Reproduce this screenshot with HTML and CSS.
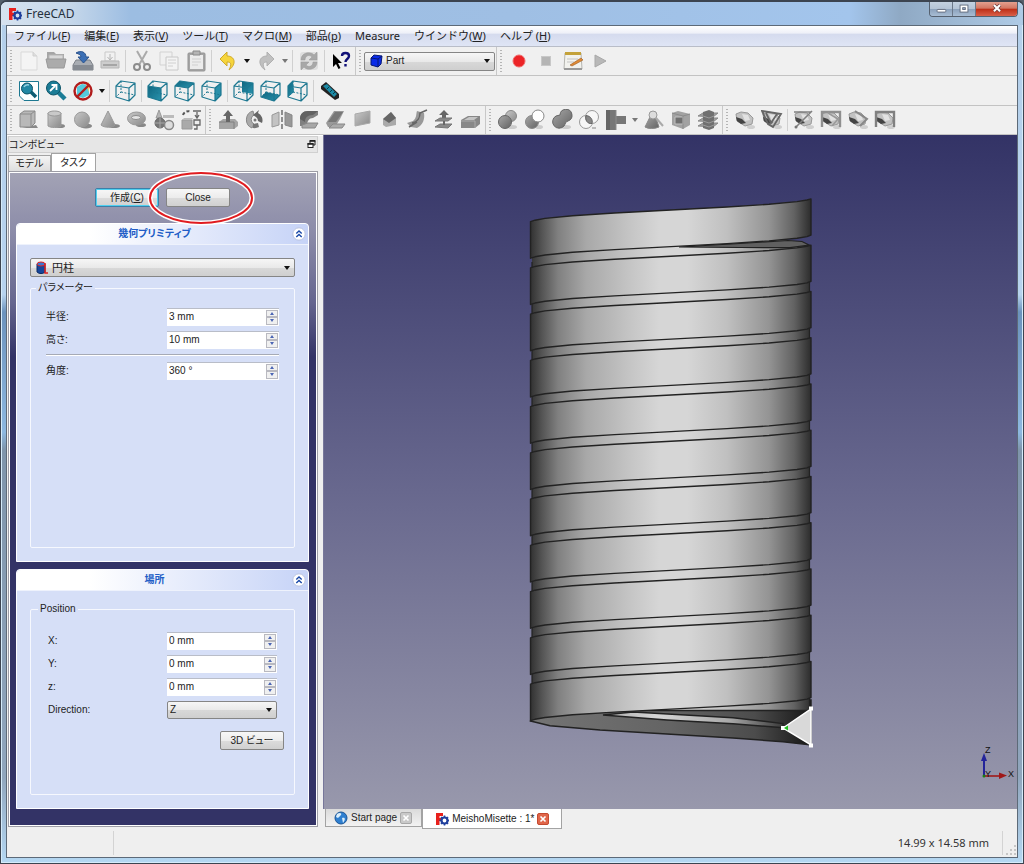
FILE: index.html
```html
<!DOCTYPE html>
<html lang="ja">
<head>
<meta charset="utf-8">
<title>FreeCAD</title>
<link rel="stylesheet" href="styles.css">
</head>
<body>
<svg class="defs" aria-hidden="true">
  <defs>
    <linearGradient id="g-grey" x1="0" y1="0" x2="1" y2="1"><stop offset="0" stop-color="#c9c9c9"/><stop offset="1" stop-color="#8a8a8a"/></linearGradient>
    <linearGradient id="g-dark" x1="0" y1="0" x2="1" y2="1"><stop offset="0" stop-color="#a8a8a8"/><stop offset="1" stop-color="#636363"/></linearGradient>
    <linearGradient id="g-teal" x1="0" y1="0" x2="1" y2="1"><stop offset="0" stop-color="#0e6680"/><stop offset="1" stop-color="#2a93ad"/></linearGradient>
    <symbol id="cube" viewBox="0 0 22 22">
      <path d="M1 6 6 1 20 3 14 8ZM14 8V21L20 15V3M1 6V17L14 21" fill="none" stroke="#1d7891" stroke-width="1.2" stroke-linejoin="round"/>
      <path d="M6 1V12L1 17M6 12 20 15" fill="none" stroke="#1d7891" stroke-dasharray="2 1.5"/>
    </symbol>
    <symbol id="logo" viewBox="0 0 14 14">
      <path d="M1 1H8V4H4.500V6H7V9H4.500V13H1Z" fill="#e8201c"/>
      <circle cx="9.500" cy="8.500" r="3" fill="none" stroke="#1f3f9d" stroke-width="2.200"/>
      <path d="M9.500 3.500V5M9.500 12V13.500M4.500 8.500H6M13 8.500H14M6 5 7 6M12 11 13 12M13 5 12 6M7 11 6 12" stroke="#1f3f9d" stroke-width="1.600"/>
    </symbol>
    <symbol id="mesh" viewBox="0 0 22 22">
      <ellipse cx="17" cy="18" rx="4" ry="2" fill="#cfcfcf"/>
      <path d="M2 5 7 3 14 4 19 9 18 15 11 17 3 12Z" fill="#c2c2c2" stroke="#999"/>
      <path d="M2 8 8 10 12 14 7 15 3 12Z" fill="#444"/>
      <path d="M8 5 14 6 16 11 11 12Z" fill="#e2e2e2"/>
    </symbol>
    <symbol id="chev" viewBox="0 0 14 14">
      <circle cx="7" cy="7" r="6.200" fill="#fff" stroke="#b9c3e0"/>
      <path d="M4.300 6.500 7 4 9.700 6.500M4.300 10 7 7.500 9.700 10" fill="none" stroke="#1848a8" stroke-width="1.400"/>
    </symbol>
  </defs>
</svg>

<div class="window">
  <header class="titlebar">
    <svg class="logo" aria-hidden="true"><use href="#logo"/></svg>
    <span class="title">FreeCAD</span>
    <div class="winbtns">
      <button class="wb" aria-label="最小化"><svg viewBox="0 0 24 16"><rect x="7.500" y="8.500" width="10" height="3" rx="1" fill="#fff" stroke="#5b6577"/></svg></button>
      <button class="wb" aria-label="最大化"><svg viewBox="0 0 24 16"><rect x="7.500" y="3.500" width="9" height="8" fill="#fff" stroke="#5b6577"/><rect x="10.500" y="6.500" width="3" height="2" fill="#9db0cc" stroke="#5b6577"/></svg></button>
      <button class="wb close" aria-label="閉じる"><svg viewBox="0 0 24 16"><path d="M8.500 3.500 15.500 10.500M15.500 3.500 8.500 10.500" stroke="#6d3a3a" stroke-width="4"/><path d="M8.500 3.500 15.500 10.500M15.500 3.500 8.500 10.500" stroke="#fff" stroke-width="2.400"/></svg></button>
    </div>
  </header>

  <div class="client">
    <nav class="menubar">
      <a href="#">ファイル(<u>F</u>)</a><a href="#">編集(<u>E</u>)</a><a href="#">表示(<u>V</u>)</a><a href="#">ツール(<u>T</u>)</a><a href="#">マクロ(<u>M</u>)</a><a href="#">部品(<u>p</u>)</a><a href="#">Measure</a><a href="#">ウインドウ(<u>W</u>)</a><a href="#">ヘルプ (<u>H</u>)</a>
    </nav>

    <div class="toolrow">
      <div class="tools">
        <span class="grip"></span>
        <button aria-label="新規"><svg viewBox="0 0 22 22"><path d="M3 2H15L19 6V20H3Z" fill="#f4f4f4" stroke="#d9d9d9"/><path d="M15 2V6H19" fill="#ddd" stroke="#d0d0d0"/></svg></button>
        <button aria-label="開く"><svg viewBox="0 0 22 22"><path d="M2 2H9L11 4H19V10H2Z" fill="#a5a5a5"/><path d="M4 5H18V10H4Z" fill="#d8d8d8" stroke="#b5b5b5"/><path d="M1 9H21L19 18H3Z" fill="#ababab" stroke="#999"/></svg></button>
        <button aria-label="保存"><svg viewBox="0 0 22 22"><path d="M4 10H18L21 15V20H1V15Z" fill="#a9adb3" stroke="#7c8188"/><path d="M1 15H21V20H1Z" fill="#868b92"/><path d="M4 3C9 0 14 2 14 7H17L11.500 13 6 7H9C9 5 7 4 4 3Z" fill="#3b6fb5" stroke="#2c548d"/></svg></button>
        <button aria-label="印刷"><svg viewBox="0 0 22 22"><path d="M6 2H16V11H6Z" fill="#f1f1f1" stroke="#c9c9c9"/><path d="M11 4V9M8.500 7 11 10 13.500 7" stroke="#b5b5b5" fill="none"/><path d="M2 11H20V18H2Z" fill="#cdcdcd" stroke="#b5b5b5"/><path d="M4 15H18" stroke="#a5a5a5" stroke-width="2"/></svg></button>
        <span class="sep"></span>
        <button aria-label="切り取り"><svg viewBox="0 0 22 22"><path d="M6 1 14 15M16 1 8 15" stroke="#aaa" stroke-width="2"/><circle cx="6" cy="17" r="3" fill="none" stroke="#8c8c8c" stroke-width="2"/><circle cx="16" cy="17" r="3" fill="none" stroke="#8c8c8c" stroke-width="2"/></svg></button>
        <button aria-label="コピー"><svg viewBox="0 0 22 22"><path d="M2 2H14V15H2Z" fill="#f0f0f0" stroke="#d2d2d2"/><path d="M8 7H20V20H8Z" fill="#f3f3f3" stroke="#c8c8c8"/><path d="M10 10H18M10 13H18M10 16H15" stroke="#d0d0d0"/></svg></button>
        <button aria-label="貼り付け"><svg viewBox="0 0 22 22"><rect x="3" y="3" width="17" height="18" rx="1" fill="#a5a5a5" stroke="#959595"/><path d="M5 5H18V19H5Z" fill="#ececec"/><path d="M8 1H15V5H8Z" fill="#b5b5b5" stroke="#8a8a8a"/><path d="M7 9H16M7 12H16M7 15H13" stroke="#d0d0d0"/></svg></button>
        <span class="sep"></span>
        <button aria-label="元に戻す"><svg viewBox="0 0 22 22"><path d="M3 9 10 2V6C18 6 20 14 12 20C15 14 14 12 10 12V16Z" fill="#f6d53c" stroke="#cfa92a"/></svg></button>
        <span class="drop"></span>
        <button aria-label="やり直し"><svg viewBox="0 0 22 22"><path d="M19 9 12 2V6C4 6 2 14 10 20C7 14 8 12 12 12V16Z" fill="#c0c0c0" stroke="#b0b0b0"/></svg></button>
        <span class="drop dim"></span>
        <span class="sep"></span>
        <button aria-label="更新"><svg viewBox="0 0 22 22"><rect x="2" y="2" width="18" height="18" rx="3" fill="#dedede"/><path d="M3 10C3 2 13 1 16 5L19 2V10H11L14 7C11 4 7 6 7 10ZM19 12C19 20 9 21 6 17L3 20V12H11L8 15C11 18 15 16 15 12Z" fill="#a8a8a8" stroke="#989898" stroke-width=".5"/></svg></button>
        <span class="sep"></span>
        <button aria-label="ヘルプ"><svg viewBox="0 0 22 22"><path d="M3 4V17L6 14 8.500 19 10.500 18 8 13H12Z" fill="#000"/><path d="M12 6C12 2 19 2 19 6C19 9 15.500 9 15.500 12M15.500 14V16.500" fill="none" stroke="#101078" stroke-width="2.400"/></svg></button>
      </div>
      <div class="tools">
        <span class="grip"></span>
        <div class="combo wb-combo">
          <svg class="combo-icon" viewBox="0 0 14 14" aria-hidden="true"><path d="M2 4 5 1 13 2 12 10 9 13 2 11Z" fill="#0a2be8" stroke="#071873"/><path d="M2 4 9 5 13 2M9 5V13" fill="none" stroke="#071873"/></svg>
          <select aria-label="ワークベンチ"><option>Part</option></select>
        </div>
      </div>
      <div class="tools last">
        <span class="grip"></span>
        <button aria-label="マクロ記録"><svg viewBox="0 0 22 22"><circle cx="11" cy="11" r="6" fill="#ec2427" stroke="#f06a6a"/></svg></button>
        <button aria-label="停止"><svg viewBox="0 0 22 22"><rect x="6.500" y="6.500" width="9" height="9" fill="#b5b5b5" stroke="#c8c8c8"/></svg></button>
        <button aria-label="マクロ"><svg viewBox="0 0 22 22"><path d="M3 3H19L20 19H2Z" fill="#f2f2ee" stroke="#b5b5b0"/><path d="M3 2H19V5H3Z" fill="#c4a23a"/><path d="M5 9H16M5 12H12" stroke="#c4c4c4"/><path d="M8 15 19 8 21 10 10 16Z" fill="#e08a35" stroke="#9a5a20" stroke-width=".6"/><path d="M2 19H20" stroke="#999" stroke-width="2"/></svg></button>
        <button aria-label="実行"><svg viewBox="0 0 22 22"><path d="M6 5 17 11 6 17Z" fill="#b8b8b8" stroke="#a8a8a8"/></svg></button>
      </div>
    </div>

    <div class="toolrow">
      <div class="tools last">
        <span class="grip"></span>
        <button aria-label="全体表示"><svg viewBox="0 0 22 22"><path d="M1.500 1.500H20.500V20.500H6L1.500 16Z" fill="#fff" stroke="#1d7891"/><circle cx="9" cy="8.500" r="5.500" fill="#2387a3" stroke="#0d5468"/><path d="M6 7C7 5 9 4.500 11 5" stroke="#9ad3e2" fill="none" stroke-width="1.500"/><path d="M13 12 18 17" stroke="#0f5d73" stroke-width="3.600"/></svg></button>
        <button aria-label="選択表示"><svg viewBox="0 0 22 22"><path d="M13 12 20 19" stroke="#1b7c96" stroke-width="4.500"/><circle cx="8.500" cy="8" r="7" fill="#1b7c96" stroke="#0d5468"/><path d="M5 11 10 6M6.500 5H11.500V10" stroke="#fff" stroke-width="1.800" fill="none"/></svg></button>
        <button aria-label="描画スタイル"><svg viewBox="0 0 22 22"><path d="M5 7 10 4 17 5V15L11 18 5 16Z" fill="#55c9dc"/><path d="M14 5 17 2V12" fill="#f0d060"/><circle cx="11" cy="11" r="8.500" fill="none" stroke="#b01c1c" stroke-width="2.400"/><path d="M5 17 17 5" stroke="#b01c1c" stroke-width="2.400"/></svg></button>
        <span class="drop"></span><span class="sep"></span>
        <button aria-label="等角投影"><svg viewBox="0 0 22 22"><use href="#cube"/></svg></button>
        <span class="sep"></span>
        <button aria-label="正面"><svg viewBox="0 0 22 22"><path d="M1 6 14 8V21L1 17Z" fill="url(#g-teal)"/><use href="#cube"/></svg></button>
        <button aria-label="上面"><svg viewBox="0 0 22 22"><path d="M1 6 6 1 20 3 14 8Z" fill="url(#g-teal)"/><use href="#cube"/></svg></button>
        <button aria-label="右面"><svg viewBox="0 0 22 22"><path d="M14 8 20 3V15L14 21Z" fill="#2a8fa9"/><use href="#cube"/></svg></button>
        <span class="sep"></span>
        <button aria-label="背面"><svg viewBox="0 0 22 22"><path d="M9 1.500 20 3V14L9 12Z" fill="url(#g-teal)"/><use href="#cube"/></svg></button>
        <button aria-label="底面"><svg viewBox="0 0 22 22"><path d="M1 17 6 12 20 15 14 21Z" fill="url(#g-teal)"/><use href="#cube"/></svg></button>
        <button aria-label="左面"><svg viewBox="0 0 22 22"><path d="M1 6 6 1 7 12 1 17Z" fill="url(#g-teal)"/><use href="#cube"/></svg></button>
        <span class="sep"></span>
        <button aria-label="計測"><svg viewBox="0 0 22 22"><path d="M2 6 7 2 20 14V18L16 20 2 9Z" fill="#222"/><path d="M4 6 8 4 18 14 15 17Z" fill="#1d8ba6"/><path d="M8 9 10 7M11 12 13 10M14 14 16 12" stroke="#083c4a"/></svg></button>
      </div>
    </div>

    <div class="toolrow">
      <div class="tools">
        <span class="grip"></span>
        <button aria-label="直方体"><svg viewBox="0 0 22 22"><path d="M4 19H20L18 16Z" fill="#888"/><path d="M2 5 6 2H17V14L13 18H2Z" fill="#b8b8b8" stroke="#888"/><path d="M2 5H13V18M13 5 17 2" fill="none" stroke="#8c8c8c"/></svg></button>
        <button aria-label="円柱"><svg viewBox="0 0 22 22"><ellipse cx="15" cy="17" rx="5" ry="2" fill="#888"/><path d="M3 4V17C6 19 13 19 16 17V4Z" fill="url(#g-grey)" stroke="#999"/><ellipse cx="9.500" cy="4.500" rx="6.500" ry="2.500" fill="#c9c9c9" stroke="#999"/></svg></button>
        <button aria-label="球"><svg viewBox="0 0 22 22"><ellipse cx="14" cy="17" rx="6" ry="2.500" fill="#888"/><circle cx="10" cy="10.500" r="7.500" fill="url(#g-grey)" stroke="#999"/></svg></button>
        <button aria-label="円錐"><svg viewBox="0 0 22 22"><ellipse cx="15" cy="17" rx="6" ry="2" fill="#888"/><path d="M9 2 16 16C14 19 5 19 2 16Z" fill="url(#g-grey)" stroke="#999"/></svg></button>
        <button aria-label="トーラス"><svg viewBox="0 0 22 22"><ellipse cx="15" cy="16" rx="5" ry="2" fill="#888"/><ellipse cx="10.500" cy="9.500" rx="9" ry="6.500" fill="url(#g-grey)" stroke="#999"/><ellipse cx="10" cy="8.500" rx="4.500" ry="2" fill="#e4e4e4" stroke="#8d8d8d"/></svg></button>
        <button aria-label="プリミティブ"><svg viewBox="0 0 22 22"><path d="M6 1 9 9H3Z" fill="#b5b5b5" stroke="#999"/><path d="M10 6H21V9H10Z" fill="#bbb"/><circle cx="7" cy="14" r="5" fill="#777" stroke="#666"/><path d="M2 14H12M7 9V19" stroke="#a8a8a8"/><circle cx="16" cy="16" r="4.500" fill="#ddd" stroke="#888" stroke-width="1.500"/></svg></button>
        <button aria-label="形状ビルダー"><svg viewBox="0 0 22 22"><path d="M2 11H12V20H2Z" fill="#aaa" stroke="#999"/><path d="M2 11 4 9H13L12 11" fill="#bbb"/><path d="M3 6C4 3 8 1 11 3" stroke="#555" fill="none" stroke-dasharray="3 2" stroke-width="2"/><path d="M13 2H21M17 3V8M15 6 17 9 19 6" stroke="#666" fill="none" stroke-width="1.300"/><path d="M14 11H20V16H14ZM17 16V20H14" fill="#eee" stroke="#666" stroke-width="1.300"/></svg></button>
      </div>
      <div class="tools">
        <span class="grip"></span>
        <button aria-label="押し出し"><svg viewBox="0 0 22 22"><path d="M2 13 6 10H18L21 13V17L17 20H2Z" fill="#a5a5a5"/><path d="M2 13H17V20" fill="none" stroke="#808080"/><path d="M11 1 16 7H13V13H9V7H6Z" fill="#666"/></svg></button>
        <button aria-label="回転"><svg viewBox="0 0 22 22"><path d="M9 2A9 9 0 0 0 8 19L10 15A5 5 0 0 1 10 6Z" fill="#aaa" stroke="#888"/><path d="M14 4A8 8 0 0 1 18 14L14 12A5 5 0 0 0 12 8L9 6 15 1Z" fill="#666"/><path d="M9 19A9 9 0 0 0 15 18L14 14 9 15Z" fill="#777"/><circle cx="11" cy="11" r="1.500" fill="#777"/></svg></button>
        <button aria-label="鏡像"><svg viewBox="0 0 22 22"><path d="M1 6 8 3V16L1 18Z" fill="#c3c3c3" stroke="#999"/><path d="M14 3 21 6V18L14 16Z" fill="#999" stroke="#888"/><path d="M11 1V21" stroke="#777" stroke-width="1.600" stroke-dasharray="5 2"/></svg></button>
        <button aria-label="フィレット"><svg viewBox="0 0 22 22"><path d="M2 17V10C2 5 5 2 10 2H20V6L15 9C11 9 9 12 9 17Z" fill="#808080"/><path d="M2 10C2 5 5 2 10 2H20L15 6C9 6 7 9 7 13Z" fill="#626262"/><path d="M10 14H20L17 19H4V16Z" fill="#a7a7a7" stroke="#888"/></svg></button>
        <button aria-label="面取り"><svg viewBox="0 0 22 22"><path d="M1 14 9 2H19L15 10 10 18H3Z" fill="#999"/><path d="M3 13 10 3H18L11 13Z" fill="#777"/><path d="M8 15H20L17 19H4Z" fill="#aaa" stroke="#888"/></svg></button>
        <button aria-label="面"><svg viewBox="0 0 22 22"><path d="M3 5 18 2V14L3 17Z" fill="url(#g-grey)" stroke="#aaa"/></svg></button>
        <button aria-label="ルールド面"><svg viewBox="0 0 22 22"><path d="M4 10 12 3 17 9V16L7 18 4 16Z" fill="#aaa"/><path d="M4 10 12 3 17 9 10 14Z" fill="#666"/></svg></button>
        <button aria-label="ロフト"><svg viewBox="0 0 22 22"><path d="M1 14 7 12C11 9 10 4 11 2L18 4C19 10 17 16 11 19L5 18Z" fill="#999"/><path d="M6 14C12 13 14 8 14 4L21 1M3 18 11 13" fill="none" stroke="#666" stroke-width="1.500"/></svg></button>
        <button aria-label="オフセット"><svg viewBox="0 0 22 22"><path d="M11 1 16 6H13V10H9V6H6Z" fill="#666"/><path d="M2 12 7 9H19L15 12ZM2 18 7 15H19L15 19Z" fill="#888" stroke="#777"/><path d="M11 12V16" stroke="#666" stroke-width="2"/></svg></button>
        <button aria-label="厚み"><svg viewBox="0 0 22 22"><path d="M1 11 8 7H20V15L15 19H1Z" fill="#888"/><path d="M4 11 9 8H18L14 11Z" fill="#c5c5c5"/><path d="M1 12H15V19" fill="none" stroke="#aaa"/></svg></button>
      </div>
      <div class="tools">
        <span class="grip"></span>
        <button aria-label="ブーリアン"><svg viewBox="0 0 22 22"><ellipse cx="15" cy="18" rx="5" ry="2" fill="#ccc"/><circle cx="14" cy="7" r="5.500" fill="url(#g-grey)" stroke="#888"/><circle cx="8" cy="13" r="6.500" fill="url(#g-dark)" stroke="#666"/></svg></button>
        <button aria-label="切り取り"><svg viewBox="0 0 22 22"><ellipse cx="15" cy="18" rx="4" ry="2" fill="#ccc"/><circle cx="8" cy="13" r="6.500" fill="url(#g-dark)" stroke="#888"/><circle cx="14" cy="7" r="6" fill="#fff" stroke="#888"/></svg></button>
        <button aria-label="結合"><svg viewBox="0 0 22 22"><ellipse cx="15" cy="18" rx="5" ry="2" fill="#ccc"/><path d="M9 6A6 6 0 1 1 17 12C14 13 15 14 13 17A6.500 6.500 0 1 1 5 7Z" fill="url(#g-dark)" stroke="#666"/></svg></button>
        <button aria-label="共通部分"><svg viewBox="0 0 22 22"><circle cx="8" cy="13" r="6.500" fill="#f7f7f7" stroke="#999"/><circle cx="14" cy="8" r="6.500" fill="#f7f7f7" stroke="#999"/><path d="M8 6.500C13 7 15 11 14 14.500C9 15 7 11 8 6.500Z" fill="#888" stroke="#666"/><path d="M14 19H18" stroke="#bbb" stroke-width="2"/></svg></button>
        <button aria-label="接続"><svg viewBox="0 0 22 22"><path d="M1 1H11V7H21V15H11V21H1Z" fill="#777"/><path d="M1 1H5V21H1Z" fill="#666"/><path d="M11 1V21" stroke="#8d8d8d"/></svg></button>
        <span class="drop dim"></span>
        <button aria-label="チェック"><svg viewBox="0 0 22 22"><path d="M8 6 2 18C5 20 12 20 16 18L12 6Z" fill="url(#g-dark)" stroke="#888"/><circle cx="10" cy="6" r="4" fill="#ddd" stroke="#999"/><path d="M13 9 20 17" stroke="#aaa" stroke-width="2"/></svg></button>
        <button aria-label="断面"><svg viewBox="0 0 22 22"><path d="M2 4 8 2 20 5V16L13 20 2 16Z" fill="#a2a2a2"/><path d="M5 8H13V15H5Z" fill="#707070" stroke="#c0c0c0"/><path d="M2 4 13 7V20M13 7 20 5" fill="none" stroke="#8c8c8c"/></svg></button>
        <button aria-label="断面群"><svg viewBox="0 0 22 22"><path d="M1 7 6 4H21L16 8ZM1 12 6 9H21L16 13ZM1 17 6 14H21L16 18Z" fill="#a0a0a0" stroke="#8a8a8a"/><path d="M6 3 12 1 17 3V19L12 21 6 19Z" fill="#707070"/><path d="M6 7 12 9 17 7M6 12 12 14 17 12M6 16 12 18 17 16" fill="none" stroke="#9a9a9a"/></svg></button>
      </div>
      <div class="tools last">
        <span class="grip"></span>
        <button aria-label="線形計測"><svg viewBox="0 0 22 22"><use href="#mesh"/></svg></button>
        <button aria-label="角度計測"><svg viewBox="0 0 22 22"><use href="#mesh"/><path d="M1 2 20 5 12 18 7 15ZM5 4 10 14 16 5" fill="none" stroke="#666" stroke-width="1.800"/></svg></button>
        <span class="sep"></span>
        <button aria-label="計測更新"><svg viewBox="0 0 22 22"><use href="#mesh"/><path d="M1 3H18M3 18 19 2" stroke="#808080" stroke-width="1.600"/><circle cx="3" cy="18" r="1.500" fill="#777"/></svg></button>
        <button aria-label="計測消去"><svg viewBox="0 0 22 22"><use href="#mesh"/><path d="M2 18V3H20V18" fill="none" stroke="#909090" stroke-width="2.400"/><path d="M8 4 18 10 12 17" fill="none" stroke="#999" stroke-width="1.500"/></svg></button>
        <button aria-label="計測3D"><svg viewBox="0 0 22 22"><use href="#mesh"/><path d="M8 2 20 10 13 17" fill="none" stroke="#888" stroke-width="2"/></svg></button>
        <button aria-label="計測差分"><svg viewBox="0 0 22 22"><use href="#mesh"/><path d="M2 18V3H20V18" fill="none" stroke="#808080" stroke-width="2.400"/></svg></button>
      </div>
    </div>

    <main class="work">
      <aside class="dock">
        <div class="dock-title"><span>コンボビュー</span><button aria-label="フロート"><svg viewBox="0 0 9 9"><path d="M3 3V1H8V5H6" fill="none" stroke="#222"/><path d="M2.500 .8H8.500" stroke="#222" stroke-width="1.600"/><rect x="1" y="3.500" width="5" height="4" fill="#fff" stroke="#222"/><path d="M.500 4H6.500" stroke="#222" stroke-width="1.600"/></svg></button></div>
        <div class="tabs" role="tablist"><button role="tab">モデル</button><button role="tab" aria-selected="true" class="active">タスク</button></div>
        <div class="panel">
          <div class="actions">
            <button class="btn default">作成(<u>C</u>)</button>
            <div class="marked">
              <button class="btn">Close</button>
              <svg class="mark" viewBox="0 0 110 56" aria-hidden="true"><ellipse cx="55" cy="28" rx="51" ry="25" fill="none" stroke="#fff" stroke-width="5"/><ellipse cx="55" cy="28" rx="51" ry="25" fill="none" stroke="#e01c20" stroke-width="2"/></svg>
            </div>
          </div>

          <section class="box">
            <h2>幾何プリミティブ<button aria-label="折りたたむ"><svg><use href="#chev"/></svg></button></h2>
            <div class="box-body">
              <div class="combo shape">
                <svg class="combo-icon" viewBox="0 0 14 14" aria-hidden="true"><path d="M2 3V11C4 13 8 13 10 11V3Z" fill="#17479c" stroke="#0c2a63"/><ellipse cx="6" cy="3" rx="4" ry="2" fill="#3b76d0" stroke="#d22"/><path d="M10 2V12H13" stroke="#d22" fill="none" stroke-width="1.500"/></svg>
                <select aria-label="形状"><option>円柱</option></select>
              </div>
              <fieldset class="params">
                <legend>パラメーター</legend>
                <div class="field"><label for="r">半径:</label><span class="spin"><input id="r" value="3 mm"><span class="arrows"><button aria-label="増"></button><button class="dn" aria-label="減"></button></span></span></div>
                <div class="field"><label for="h">高さ:</label><span class="spin"><input id="h" value="10 mm"><span class="arrows"><button aria-label="増"></button><button class="dn" aria-label="減"></button></span></span></div>
                <hr>
                <div class="field"><label for="a">角度:</label><span class="spin"><input id="a" value="360 °"><span class="arrows"><button aria-label="増"></button><button class="dn" aria-label="減"></button></span></span></div>
              </fieldset>
            </div>
          </section>

          <section class="box">
            <h2>場所<button aria-label="折りたたむ"><svg><use href="#chev"/></svg></button></h2>
            <div class="box-body">
              <fieldset class="position">
                <legend>Position</legend>
                <div class="field"><label for="x">X:</label><span class="spin"><input id="x" value="0 mm"><span class="arrows"><button aria-label="増"></button><button class="dn" aria-label="減"></button></span></span></div>
                <div class="field"><label for="y">Y:</label><span class="spin"><input id="y" value="0 mm"><span class="arrows"><button aria-label="増"></button><button class="dn" aria-label="減"></button></span></span></div>
                <div class="field"><label for="z">z:</label><span class="spin"><input id="z" value="0 mm"><span class="arrows"><button aria-label="増"></button><button class="dn" aria-label="減"></button></span></span></div>
                <div class="field"><label for="dir">Direction:</label><div class="combo dir"><select id="dir"><option>Z</option></select></div></div>
                <div class="view-row"><button class="btn">3D ビュー</button></div>
              </fieldset>
            </div>
          </section>
        </div>
      </aside>

      <section class="mdi">
        <div class="view3d">
          <svg viewBox="324 135 693 674" preserveAspectRatio="xMidYMid meet" role="img" aria-label="3Dビュー">
            <defs>
              <linearGradient id="cyl" gradientUnits="userSpaceOnUse" x1="530" y1="0" x2="811" y2="0">
                <stop offset="0" stop-color="#303030"/><stop offset=".04" stop-color="#525252"/><stop offset=".1" stop-color="#808080"/><stop offset=".2" stop-color="#a8a8a8"/><stop offset=".35" stop-color="#c4c4c4"/><stop offset=".46" stop-color="#d6d6d6"/><stop offset=".56" stop-color="#d6d6d6"/><stop offset=".7" stop-color="#c0c0c0"/><stop offset=".85" stop-color="#949494"/><stop offset=".94" stop-color="#626262"/><stop offset="1" stop-color="#2c2c2c"/>
              </linearGradient>
              <linearGradient id="under" gradientUnits="userSpaceOnUse" x1="530" y1="0" x2="811" y2="0">
                <stop offset="0" stop-color="#747474"/><stop offset=".5" stop-color="#646464"/><stop offset=".8" stop-color="#4c4c4c"/><stop offset="1" stop-color="#161616"/>
              </linearGradient>
              <linearGradient id="strip" gradientUnits="userSpaceOnUse" x1="603" y1="0" x2="783" y2="0">
                <stop offset="0" stop-color="#aaa"/><stop offset=".3" stop-color="#d6d6d6"/><stop offset=".7" stop-color="#aaa"/><stop offset="1" stop-color="#3a3a3a"/>
              </linearGradient>
              <path id="band" d="M530.500 221.600 535 220.200 545 218.400 572.500 215.700 614.500 213 671 210 727 207 769 204.300 797 201.600 807 200 811 198.900V235L807 236.600 797 238.200 769 240.900 727 243.600 671 246.600 614.500 249.600 572.500 252.300 545 255 535 256.800 530.500 258.200Z" fill="url(#cyl)" stroke="#222" stroke-width="1.400" stroke-linejoin="round"/>
            </defs>
            <path d="M530.500 721 550 725.700 600 730 667 734 733 738 783 741.700 811 745V700L671 695 540 700Z" fill="url(#under)" stroke="#222" stroke-width="1.500"/>
            <path d="M532 240H788L803 242 809.500 246V711L657 711 540 705 532 700Z" fill="url(#cyl)"/>
            <path d="M532 262V690M809.500 246V711" stroke="#222" stroke-width="1.200"/>
            <path d="M679 247 740 243.500 788 240.500 802 241.500 809 245 790 247.700 740 247.500Z" fill="#606060" stroke="#222" stroke-width="1.200"/>
            <path d="M603 715 657 710.500H810V716L785 728Z" fill="url(#under)"/>
            <path d="M603 715 633 712 733 717.700 783 723.500V727.700L733 723.700 667 720Z" fill="url(#strip)" stroke="#222" stroke-width="1.400"/>
            <path d="M640 710.500H810" stroke="#222" stroke-width="1.400"/>
            <use href="#band"/><use href="#band" y="46.250"/><use href="#band" y="92.500"/><use href="#band" y="138.750"/><use href="#band" y="185"/><use href="#band" y="231.250"/><use href="#band" y="277.500"/><use href="#band" y="323.750"/><use href="#band" y="370"/><use href="#band" y="416.250"/><use href="#band" y="462.500"/>
            <path d="M783 728 811 709V745Z" fill="#d9d9d9" stroke="#fff" stroke-width="1.500"/>
            <path d="M809 706.500H813V710.500H809ZM809 743.500H813V747.500H809ZM781 726H785V730H781Z" fill="#fff"/>
            <path d="M784 728 788 725.500V730.500Z" fill="#1fc11f"/>
            <path d="M984 776V758" stroke="#24249a" stroke-width="2"/><path d="M984 753 987 761H981Z" fill="#24249a"/>
            <path d="M984 776H1001" stroke="#a01818" stroke-width="1.600"/><path d="M1007 775.500 999 772.500V779Z" fill="#a01818"/><circle cx="984" cy="776" r="1.500" fill="#168016"/>
            <g class="axis"><text x="985" y="753">Z</text><text x="985" y="777">Y</text><text x="1008" y="777">X</text></g>
          </svg>
        </div>
        <div class="doc-tabs">
          <div class="doc-tab"><svg class="ticon" viewBox="0 0 14 14" aria-hidden="true"><circle cx="7" cy="7" r="6" fill="#2f7fd0" stroke="#1b5596"/><path d="M3 3C6 1 8 2 7 4L4 7 2 6ZM8 7C11 6 12 8 9 12Z" fill="#dceefa"/></svg><a href="#">Start page</a><button class="x" aria-label="閉じる"><svg viewBox="0 0 12 12"><path d="M3 3 9 9M9 3 3 9" stroke="#fff" stroke-width="2"/></svg></button></div>
          <div class="doc-tab active"><svg class="ticon" aria-hidden="true"><use href="#logo"/></svg><a href="#">MeishoMisette : 1*</a><button class="x" aria-label="閉じる"><svg viewBox="0 0 12 12"><path d="M3 3 9 9M9 3 3 9" stroke="#fff" stroke-width="2"/></svg></button></div>
        </div>
      </section>
    </main>

    <footer class="status">
      <span class="msg"></span>
      <span class="dims">14.99 x 14.58 mm</span>
      <svg class="resize" viewBox="0 0 14 26" aria-hidden="true"><path d="M11 15h2v2h-2zM7 19h2v2H7zM11 19h2v2h-2zM3 23h2v2H3zM7 23h2v2H7zM11 23h2v2h-2z" fill="#c6c6c6"/></svg>
    </footer>
  </div>
</div>
</body>
</html>
```
FILE: styles.css
```css
* { box-sizing: border-box; }
body {
  margin: 0;
  font: 10px/14px "Liberation Sans", "Noto Sans CJK JP", sans-serif;
  font-feature-settings: "palt";
  color: #222;
  background: #55606c;
}
button, input, select { font: inherit; font-feature-settings: inherit; color: inherit; margin: 0; }
button { padding: 0; border: 0; background: none; }
a { color: inherit; text-decoration: none; }
.defs { position: absolute; width: 0; height: 0; }

.window {
  display: flex;
  flex-direction: column;
  min-height: 100vh;
  padding: 0 5px 5px;
  border: 1px solid #3c4450;
  border-top-width: 2px;
  border-radius: 7px 7px 0 0;
  background: linear-gradient(180deg, #b4cfea 0, #b7d3ee 34%, #6c93bd 36%, #8db8e0 50%, #7f95ab 52%, #90a6bd 90%, #b5d8f3 100%);
  box-shadow: inset 0 0 0 1px #d5ebfa;
}
.titlebar {
  display: flex;
  align-items: center;
  height: 23px;
  margin: 0 -5px;
  padding-left: 7px;
  border-radius: 6px 6px 0 0;
  background: linear-gradient(90deg, #d6e2ef 0, #c5d7ea 70px, #9cbde2 130px, #9fbfe4 50%, #a3c5ec 83%, #8fa9c4 88%, #afcbe6 100%);
}
.logo { width: 14px; height: 14px; }
.title { flex: 1; margin-left: 4px; font: 12px/16px "Noto Sans", sans-serif; color: #26313e; }
.winbtns { display: flex; align-self: flex-start; margin-right: 5px; border: 1px solid #56616f; border-top: 0; border-radius: 0 0 4px 4px; overflow: hidden; }
.wb { width: 23px; height: 14px; border-right: 1px solid #6b7889; background: linear-gradient(#c3d1e0 0, #b4c4d6 48%, #8ba1bb 50%, #a8bdd4 100%); }
.wb svg { display: block; width: 22px; height: 14px; margin: auto; }
.wb.close { width: 41px; border: 0; background: linear-gradient(#e3a08f 0, #d27561 45%, #bd2e16 50%, #d9604a 100%); }

.client { display: flex; flex-direction: column; flex: 1; border: 1px solid #5d6a78; background: #efefef; }

.menubar {
  display: flex;
  align-items: center;
  gap: 14px;
  height: 21px;
  padding-left: 7px;
  border-bottom: 1px solid #b9bdc8;
  background: linear-gradient(#fff 0, #eef0f8 35%, #d5dbee 42%, #dfe5f5 100%);
  font: 11px/16px "Noto Sans", "Noto Sans CJK JP", sans-serif;
}
.menubar a { white-space: nowrap; }

.toolrow { display: flex; height: 29px; border-bottom: 1px solid #c3c3c3; background: #f0f0f0; }
.toolrow:nth-of-type(2) { height: 30px; }
.tools { display: flex; align-items: center; padding-right: 1px; border-right: 1px solid #c8c8c8; }
.tools.last { border-right: 0; }
.tools button { display: grid; place-items: center; width: 27px; height: 27px; flex: none; }
.tools button svg { width: 22px; height: 22px; }
.grip { width: 8px; height: 22px; flex: none; background: repeating-linear-gradient(#b5b5b5 0 1px, transparent 1px 3px) 3px 0 / 2px 100% no-repeat; }
.sep { width: 5px; height: 22px; flex: none; background: linear-gradient(#d0d0d0, #d0d0d0) 2px 0 / 1px 100% no-repeat; }
.drop { width: 11px; flex: none; display: grid; place-items: center; }
.drop::before, .combo::after { content: ""; border: 3px solid transparent; border-top: 4px solid #111; border-bottom: 0; }
.drop.dim::before { border-top-color: #777; }

.combo {
  display: flex;
  align-items: center;
  height: 19px;
  padding: 0 4px;
  border: 1px solid #858585;
  border-radius: 2px;
  background: linear-gradient(#f6f6f6 0, #e9e9e9 50%, #d8d8d8 52%, #cfcfcf 100%);
}
.combo select { flex: 1; min-width: 0; appearance: none; border: 0; padding: 0 1px; background: none; }
.combo-icon { width: 14px; height: 14px; flex: none; margin-right: 2px; }
.wb-combo { width: 131px; }

.work { display: flex; flex: 1; }
.dock { display: flex; flex-direction: column; width: 316px; flex: none; padding: 0 5px 2px 1px; border-top: 1px solid #fff; }
.dock-title { display: flex; align-items: center; justify-content: space-between; height: 17px; padding: 0 1px 0 0; border: 1px solid #d0d0d0; background: #e6e6e6; }
.dock-title button { width: 9px; height: 9px; }
.dock-title svg { display: block; width: 9px; height: 9px; }
.tabs { display: flex; align-items: flex-end; height: 18px; }
.tabs button { width: 43px; height: 16px; border: 1px solid #a3a3a3; border-bottom: 0; background: linear-gradient(#f4f4f4, #dedede); }
.tabs .active { width: 45px; height: 18px; background: #fff; }

.panel {
  display: flex;
  flex-direction: column;
  flex: 1;
  gap: 7px;
  padding: 16px 7px 16px;
  border: 1px solid #9d9da5;
  border-right-width: 2px;
  outline: 1px solid #fff;
  outline-offset: -2px;
  background: linear-gradient(#a3a3b5 0, #8c8ca9 60px, #66668f 130px, #333366 185px);
}
.actions { display: flex; justify-content: center; gap: 7px; padding-bottom: 9px; }
.btn {
  display: block;
  width: 64px;
  height: 19px;
  border: 1px solid #858585;
  border-radius: 2px;
  background: linear-gradient(#f7f7f7 0, #ececec 50%, #dcdcdc 52%, #d0d0d0 100%);
}
.btn.default { border-color: #3c7fa8; box-shadow: inset 0 0 0 1px #4fd0f0; }
.marked { position: relative; }
.mark { position: absolute; left: -20px; top: -18px; width: 110px; height: 56px; pointer-events: none; }

.box { border: 1px solid #fff; border-radius: 4px 4px 0 0; background: #d6dff7; }
.box h2 {
  display: flex;
  align-items: center;
  height: 21px;
  margin: 0;
  padding: 0 2px 0 0;
  border-bottom: 1px solid #eef2fc;
  border-radius: 4px 4px 0 0;
  background: linear-gradient(90deg, #fff 0, #fff 25%, #c6d3f7 100%);
  font-size: 10px;
  color: #215dc6;
}
.box h2 button { margin-left: auto; }
.box h2::before { content: ""; margin-right: auto; }
.box h2 svg { display: block; width: 14px; height: 14px; }
.box-body { display: flex; flex-direction: column; padding: 11px 13px 13px; }
.shape { margin-top: 2px; font-size: 11px; }
fieldset { min-width: 0; margin: 0; padding: 0 15px; border: 1px solid #f6f8fe; border-radius: 2px; }
legend { margin-left: -10px; padding: 0 2px; }
.params { height: 267px; margin-top: 4px; padding-top: 10px; }
.position { height: 193px; padding: 13px 17px 0; }
.field { display: flex; align-items: center; justify-content: space-between; height: 23px; }
.spin { display: flex; width: 112px; height: 18px; background: #fff; border-top: 1px solid #b9bdc8; }
.position .spin, .dir { width: 110px; }
.spin input { flex: 1; min-width: 0; border: 0; padding: 0 2px; background: none; }
.arrows { display: flex; flex-direction: column; width: 13px; padding: 1px 1px 1px 0; }
.arrows button { display: grid; place-items: center; flex: 1; border: 1px solid #b9b9c0; background: #f0f0f0; }
.arrows button::before { content: ""; border: 2px solid transparent; border-top: 0; border-bottom: 3px solid #4c66b4; }
.arrows .dn::before { border-top: 3px solid #4c66b4; border-bottom: 0; }
hr { margin: 3px 0; border: 0; border-top: 1px solid #a6aab5; border-bottom: 1px solid #fff; }
.dir { height: 18px; padding: 0 4px 0 1px; }
.view-row { display: flex; justify-content: flex-end; padding-top: 10px; margin-right: -7px; }

.mdi { display: flex; flex-direction: column; flex: 1; min-width: 0; }
.view3d { display: grid; flex: 1; border-left: 1px solid #77779a; background: linear-gradient(#333366 0, #65658c 50%, #9898ac 100%); }
.view3d svg { width: 100%; height: 100%; min-height: 0; }
.axis { font: 9px "Liberation Sans", sans-serif; fill: #111; }
.doc-tabs { display: flex; align-items: flex-start; height: 20px; padding-left: 2px; }
.doc-tab { display: flex; align-items: center; gap: 3px; height: 18px; padding: 0 9px 0 8px; border: 1px solid #a3a3a3; border-top: 0; background: linear-gradient(#dadada, #f3f3f3); }
.doc-tab.active { height: 20px; padding: 0 12px; background: #fff; }
.ticon { width: 14px; height: 14px; }
.x { width: 12px; height: 12px; border: 1px solid #a8a8a8; border-radius: 2px; background: #c9c9c9; }
.active .x { border-color: #c44a30; background: #e0664a; }
.x svg { display: block; width: 10px; height: 10px; }

.status { display: flex; align-items: center; height: 28px; font: 11px/16px "Noto Sans", sans-serif; color: #333; }
.msg { width: 107px; height: 24px; border-right: 1px solid #d3d3d3; }
.dims { margin-left: auto; padding: 0 13px 0 0; border-right: 1px solid #d3d3d3; line-height: 24px; }
.resize { width: 14px; height: 26px; }
```
